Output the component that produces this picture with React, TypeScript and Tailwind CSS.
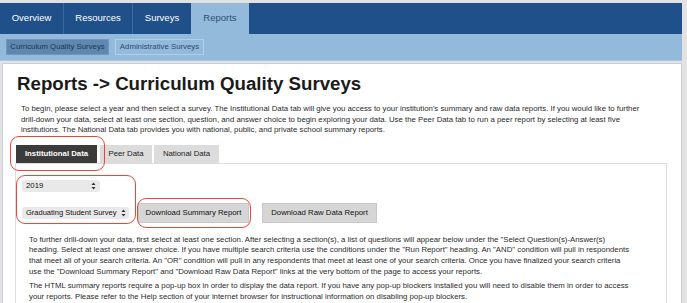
import React from "react";

const font = { fontFamily: '"Liberation Sans", Arial, Helvetica, sans-serif' };

function UpDown() {
  return (
    <svg width="5" height="8" viewBox="0 0 5 8" className="ml-auto shrink-0">
      <path d="M2.5 0.5 L4.5 3 L0.5 3 Z" fill="#333" />
      <path d="M2.5 7.5 L4.5 5 L0.5 5 Z" fill="#333" />
    </svg>
  );
}

export default function App() {
  return (
    <div
      className="relative w-[687px] h-[303px] overflow-hidden bg-[#e2e2e2] pt-[3px] text-[#222]"
      style={font}
    >
      {/* top nav */}
      <div className="flex h-[31px] w-[682px] bg-[#1f5089]">
        <div className="flex items-center justify-center w-[64px] border-r border-[#3a689b] text-white text-[9.5px]">
          Overview
        </div>
        <div className="flex items-center justify-center w-[69px] border-r border-[#3a689b] text-white text-[9.5px]">
          Resources
        </div>
        <div className="flex items-center justify-center w-[58px] text-white text-[9.5px]">
          Surveys
        </div>
        <div className="flex items-center justify-center w-[58px] bg-[#93badb] text-[#2f4f75] text-[9.5px]">
          Reports
        </div>
      </div>
      {/* sub nav */}
      <div className="flex items-center h-[27px] w-[682px] bg-[#93badb] pl-[6px] gap-[6px] border-b border-[#a9c7e0]">
        <div className="h-[16px] w-[103px] flex items-center justify-center bg-[#5f88b0] text-[#1d3553] text-[7.8px] border border-[#7197bb]">
          Curriculum Quality Surveys
        </div>
        <div className="h-[16px] w-[89px] flex items-center justify-center bg-[#93badb] text-[#2a4a72] text-[7.8px] border border-[#b0d0ea]">
          Administrative Surveys
        </div>
      </div>
      {/* content panel */}
      <div className="mt-[2px] ml-[2px] w-[680px] h-[300px] bg-white border border-[#c9cfd6]">
        <h1 className="mt-[8px] ml-[14px] text-[18.7px] font-bold leading-[24px] text-[#1a1a1a] whitespace-nowrap">
          Reports -&gt; Curriculum Quality Surveys
        </h1>
        <p className="mt-[8px] ml-[18px] text-[7.8px] leading-[10.5px] text-[#2b2b2b] whitespace-nowrap">
          To begin, please select a year and then select a survey. The Institutional Data tab will give you access to your institution's summary and raw data reports. If you would like to further
          <br />
          drill-down your data, select at least one section, question, and answer choice to begin exploring your data. Use the Peer Data tab to run a peer report by selecting at least five
          <br />
          institutions. The National Data tab provides you with national, public, and private school summary reports.
        </p>
        {/* tabs */}
        <div className="ml-[13px] mt-[9px] flex items-end">
          <div className="h-[18px] w-[81px] flex items-center justify-center bg-[#3b3b3b] text-white font-bold text-[7.8px]">
            Institutional Data
          </div>
          <div className="ml-[3px] h-[18px] w-[52px] flex items-center justify-center bg-[#dcdcdc] text-[#222] text-[7.8px]">
            Peer Data
          </div>
          <div className="ml-[2px] h-[18px] w-[65px] flex items-center justify-center bg-[#dcdcdc] text-[#222] text-[7.8px]">
            National Data
          </div>
        </div>
        <div className="ml-[12px] w-[652px] h-[200px] border border-[#dddddd]">
          <div className="ml-[6px] mt-[16px] w-[78px] h-[12px] bg-[#e9e9e9] rounded-[3px] flex items-center pl-[4px] pr-[4px] text-[7.8px] text-[#111]">
            2019
            <UpDown />
          </div>
          <div className="flex items-center mt-[11px]">
            <div className="ml-[6px] w-[107px] h-[12px] bg-[#e9e9e9] rounded-[3px] flex items-center pl-[4px] pr-[3px] text-[7.5px] text-[#111] whitespace-nowrap">
              Graduating Student Survey
              <UpDown />
            </div>
            <div className="ml-[9px] h-[20px] w-[111px] flex items-center justify-center bg-[#d6d6d6] border border-[#c8c8c8] text-[7.8px] text-[#111]">
              Download Summary Report
            </div>
            <div className="ml-[13px] h-[20px] w-[115px] flex items-center justify-center bg-[#d6d6d6] border border-[#c8c8c8] text-[7.8px] text-[#111]">
              Download Raw Data Report
            </div>
          </div>
          <p className="mt-[12px] ml-[13px] text-[7.8px] leading-[10.7px] text-[#2b2b2b] whitespace-nowrap">
            To further drill-down your data, first select at least one section. After selecting a section(s), a list of questions will appear below under the "Select Question(s)-Answer(s)
            <br />
            heading. Select at least one answer choice. If you have multiple search criteria use the conditions under the "Run Report" heading. An "AND" condition will pull in respondents
            <br />
            that meet all of your search criteria. An "OR" condition will pull in any respondents that meet at least one of your search criteria. Once you have finalized your search criteria
            <br />
            use the "Download Summary Report" and "Download Raw Data Report" links at the very bottom of the page to access your reports.
          </p>
          <p className="mt-[4px] ml-[13px] text-[7.8px] leading-[10.7px] text-[#2b2b2b] whitespace-nowrap">
            The HTML summary reports require a pop-up box in order to display the data report. If you have any pop-up blockers installed you will need to disable them in order to access
            <br />
            your reports. Please refer to the Help section of your internet browser for instructional information on disabling pop-up blockers.
          </p>
        </div>
      </div>
      {/* red annotation outlines */}
      <div className="absolute left-[10px] top-[136px] w-[95px] h-[35px] border-[1.5px] border-[#e5493c] rounded-[9px]" />
      <div className="absolute left-[16px] top-[175px] w-[120px] h-[49px] border-[1.5px] border-[#e5493c] rounded-[9px]" />
      <div className="absolute left-[137px] top-[198px] w-[114px] h-[30px] border-[1.5px] border-[#e5493c] rounded-[9px]" />
    </div>
  );
}
